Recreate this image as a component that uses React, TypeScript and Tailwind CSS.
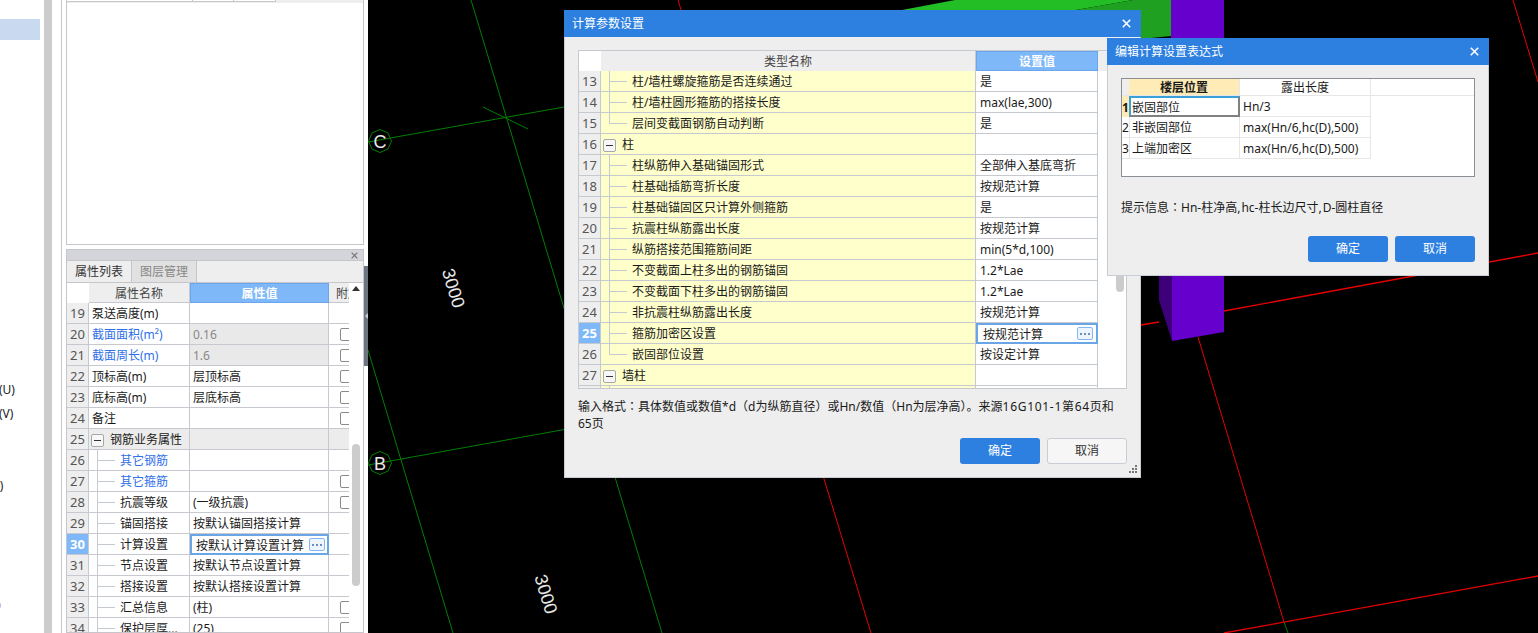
import React from "react";

const FONT = "font-['Noto_Sans','Noto_Sans_CJK_SC',sans-serif]";

function CloseIcon({ color = "#fff", size = 9 }: { color?: string; size?: number }) {
  return (
    <svg width={size} height={size} viewBox="0 0 9 9" className="block">
      <path d="M0.8 0.8L8.2 8.2M8.2 0.8L0.8 8.2" stroke={color} strokeWidth="1.6" />
    </svg>
  );
}

function T({ children }: { children?: React.ReactNode }) {
  return <span className="translate-y-px">{children}</span>;
}

function P({ children }: { children: React.ReactNode }) {
  return <span className="font-['Noto_Sans_CJK_TC',sans-serif]">{children}</span>;
}

function Tree({ last, cap }: { last?: boolean; cap?: boolean }) {
  return (
    <svg width="31" height="20" className="block shrink-0">
      <path d={`M8.5 0V${cap ? 20 : last ? 10.5 : 20}`} stroke="#c5c9d0" fill="none" />
      {!cap && <path d="M8.5 10.5H26" stroke="#c5c9d0" fill="none" />}
    </svg>
  );
}

function Minus() {
  return (
    <div className="ml-[2px] mr-[6px] flex h-[13px] w-[13px] shrink-0 translate-y-px items-center justify-center rounded-[2px] border border-[#a8a8a8] bg-[#f7f7f7]">
      <div className="h-px w-[7px] bg-[#333]" />
    </div>
  );
}

function MoreBtn() {
  return (
    <div className="flex h-[13px] w-[16px] shrink-0 items-center justify-center gap-[2px] rounded-[2px] border border-[#7eb8f8] bg-[#eef5fe]">
      <div className="h-[2px] w-[2px] bg-[#6d8fc0]" />
      <div className="h-[2px] w-[2px] bg-[#6d8fc0]" />
      <div className="h-[2px] w-[2px] bg-[#6d8fc0]" />
    </div>
  );
}

function Index({ n, sel, w = "w-[22px]" }: { n: number; sel?: boolean; w?: string }) {
  return (
    <div
      className={`${w} flex h-full shrink-0 items-center justify-center border-r border-[#c5c9d0] text-[13px] ${
        sel ? "bg-[#7eb8f8] font-bold text-white" : "bg-[#eeeeee] text-[#555]"
      }`}
    >
      <T>{n}</T>
    </div>
  );
}

type D1Row = { n: number; name: string; value: string; kind?: "group" | "last"; sel?: boolean };

const d1Rows: D1Row[] = [
  { n: 13, name: "柱/墙柱螺旋箍筋是否连续通过", value: "是" },
  { n: 14, name: "柱/墙柱圆形箍筋的搭接长度", value: "max(lae,300)" },
  { n: 15, name: "层间变截面钢筋自动判断", value: "是", kind: "last" },
  { n: 16, name: "柱", value: "", kind: "group" },
  { n: 17, name: "柱纵筋伸入基础锚固形式", value: "全部伸入基底弯折" },
  { n: 18, name: "柱基础插筋弯折长度", value: "按规范计算" },
  { n: 19, name: "柱基础锚固区只计算外侧箍筋", value: "是" },
  { n: 20, name: "抗震柱纵筋露出长度", value: "按规范计算" },
  { n: 21, name: "纵筋搭接范围箍筋间距", value: "min(5*d,100)" },
  { n: 22, name: "不变截面上柱多出的钢筋锚固", value: "1.2*Lae" },
  { n: 23, name: "不变截面下柱多出的钢筋锚固", value: "1.2*Lae" },
  { n: 24, name: "非抗震柱纵筋露出长度", value: "按规范计算" },
  { n: 25, name: "箍筋加密区设置", value: "按规范计算", sel: true },
  { n: 26, name: "嵌固部位设置", value: "按设定计算", kind: "last" },
  { n: 27, name: "墙柱", value: "", kind: "group" },
];

function SettingsDialog() {
  return (
    <div className="absolute left-[564px] top-[10px] flex h-[468px] w-[577px] flex-col">
      <div className="flex h-[27px] shrink-0 items-center justify-between bg-[#2d7fe0] pl-[8px] pr-[10px] text-[12px] text-white">
        <span>计算参数设置</span>
        <CloseIcon />
      </div>
      <div className="relative flex flex-1 flex-col border-x border-b border-[#c8ccd4] bg-[#eeeeee] px-[13px] pt-[13px]">
        <div className="relative h-[339px] overflow-hidden border border-[#c5c9d0] bg-white">
          <div className="flex h-[20px] bg-[#eeeeee] text-[12px] text-[#444]">
            <div className="w-[22px] shrink-0 bg-white" />
            <div className="flex w-[375px] shrink-0 items-center justify-center border-r border-[#c5c9d0]">
              <T>类型名称</T>
            </div>
            <div className="flex w-[122px] shrink-0 items-center justify-center border border-[#6aa6ec] bg-[#7eb8f8] font-bold text-white">
              <T>设置值</T>
            </div>
          </div>
          {d1Rows.map((r) => (
            <div key={r.n} className="flex h-[21px] text-[12px] text-[#1a1a1a]">
              <div className="w-[22px] shrink-0 border-b border-[#c5c9d0]">
                <Index n={r.n} sel={r.sel} />
              </div>
              <div className="flex w-[375px] shrink-0 items-center border-b border-r border-[#c5c9d0] bg-[#ffffcc]">
                {r.kind === "group" ? <Minus /> : <Tree last={r.kind === "last"} />}
                <T>{r.name}</T>
              </div>
              {r.sel ? (
                <div className="flex w-[122px] shrink-0 items-center justify-between border-2 border-[#6aa6e6] pl-[5px] pr-[3px]">
                  <T>{r.value}</T>
                  <MoreBtn />
                </div>
              ) : (
                <div className="flex w-[122px] shrink-0 items-center border-b border-r border-[#c5c9d0] pl-[4px]">
                  <T>{r.value}</T>
                </div>
              )}
            </div>
          ))}
          <div className="flex h-[21px]">
            <div className="w-[22px] shrink-0 border-r border-[#c5c9d0] bg-[#eeeeee]" />
            <div className="w-[375px] shrink-0 border-r border-[#c5c9d0] bg-[#ffffcc]">
              <Tree cap />
            </div>
            <div className="w-[122px] shrink-0 border-r border-[#c5c9d0]" />
          </div>
          <div className="absolute left-[537px] top-[150px] h-[91px] w-[8px] rounded-[4px] bg-[#cccccc]" />
        </div>
        <p className="mt-[8px] text-[12px] leading-[17px] text-[#1a1a1a]">
          输入格式<P>：</P>具体数值或数值*d<P>（</P>d为纵筋直径<P>）</P>或Hn/数值<P>（</P>Hn为层净高<P>）</P>。来源
          <span className="tracking-[0.7px]">16G101-1第64</span>页和
          <br />
          65页
        </p>
        <div className="mt-[6px] flex justify-end gap-[7px]">
          <button className="h-[26px] w-[80px] rounded-[3px] bg-[#2d7fe0] text-[12px] text-white">确定</button>
          <button className="h-[26px] w-[80px] rounded-[3px] border border-[#c8ccd4] bg-[#f6f6f6] text-[12px] text-[#333]">
            取消
          </button>
        </div>
        <svg width="10" height="10" viewBox="0 0 10 10" className="absolute bottom-[2px] right-[2px]">
          <path d="M7 0h2v2H7zM4 3h2v2H4zM7 3h2v2H7zM1 6h2v2H1zM4 6h2v2H4zM7 6h2v2H7z" fill="#777" />
        </svg>
      </div>
    </div>
  );
}

const d2Rows = [
  { n: "2", a: "非嵌固部位", b: "max(Hn/6,hc(D),500)" },
  { n: "3", a: "上端加密区", b: "max(Hn/6,hc(D),500)" },
];

function ExprDialog() {
  return (
    <div className="absolute left-[1107px] top-[38px] flex h-[238px] w-[382px] flex-col">
      <div className="flex h-[27px] shrink-0 items-center justify-between bg-[#2d7fe0] pl-[8px] pr-[10px] text-[12px] text-white">
        <span>编辑计算设置表达式</span>
        <CloseIcon />
      </div>
      <div className="flex flex-1 flex-col border-x border-b border-[#c8ccd4] bg-[#eeeeee] px-[13px] pt-[13px] text-[12px] text-[#1a1a1a]">
        <div className="h-[99px] border border-[#8a8f96] bg-white">
          <div className="flex h-[17px] border-b border-[#e6e6e6]">
            <div className="w-[7px] bg-[#eeeeee]" />
            <div className="flex w-[111px] items-center justify-center border-r border-[#e6e6e6] bg-[#feebb5] font-bold">
              <T>楼层位置</T>
            </div>
            <div className="flex w-[131px] items-center justify-center border-r border-[#e6e6e6]">
              <T>露出长度</T>
            </div>
          </div>
          <div className="flex h-[21px]">
            <div className="flex w-[7px] items-center justify-center overflow-hidden bg-[#feebb5] font-bold">
              <T>1</T>
            </div>
            <div className="flex w-[111px] items-center border-2 border-b-[#808080] border-l-[#3aa0d8] border-r-[#808080] border-t-[#3aa0d8] pl-[1px]">
              <T>嵌固部位</T>
            </div>
            <div className="flex w-[131px] items-center border-b border-r border-[#e6e6e6] pl-[3px]">
              <T>Hn/3</T>
            </div>
          </div>
          {d2Rows.map((r) => (
            <div key={r.n} className="flex h-[21px]">
              <div className="flex w-[7px] items-center justify-center overflow-hidden border-b border-[#e6e6e6]">
                <T>{r.n}</T>
              </div>
              <div className="flex w-[111px] items-center border-x border-b border-[#e6e6e6] pl-[2px]">
                <T>{r.a}</T>
              </div>
              <div className="flex w-[131px] items-center border-b border-r border-[#e6e6e6] pl-[3px]">
                <T>{r.b}</T>
              </div>
            </div>
          ))}
        </div>
        <p className="mt-[21px] leading-[17px]">
          提示信息<P>：</P>Hn-柱净高,<span className="ml-[1px]">hc-</span>柱长边尺寸,
          <span className="ml-[1px]">D-</span>圆柱直径
        </p>
        <div className="mt-[20px] flex justify-end gap-[7px]">
          <button className="h-[26px] w-[80px] rounded-[3px] bg-[#2d7fe0] text-white">确定</button>
          <button className="h-[26px] w-[80px] rounded-[3px] bg-[#2d7fe0] text-white">取消</button>
        </div>
      </div>
    </div>
  );
}

type PRow = {
  n: number;
  name: string;
  value?: string;
  blue?: boolean;
  grey?: boolean;
  check?: boolean;
  tree?: boolean;
  group?: boolean;
  sel?: boolean;
};

const pRows: PRow[] = [
  { n: 19, name: "泵送高度(m)" },
  { n: 20, name: "截面面积(m²)", value: "0.16", blue: true, grey: true, check: true },
  { n: 21, name: "截面周长(m)", value: "1.6", blue: true, grey: true, check: true },
  { n: 22, name: "顶标高(m)", value: "层顶标高", check: true },
  { n: 23, name: "底标高(m)", value: "层底标高", check: true },
  { n: 24, name: "备注", check: true },
  { n: 25, name: "钢筋业务属性", group: true },
  { n: 26, name: "其它钢筋", tree: true, blue: true },
  { n: 27, name: "其它箍筋", tree: true, blue: true, check: true },
  { n: 28, name: "抗震等级", value: "(一级抗震)", tree: true, check: true },
  { n: 29, name: "锚固搭接", value: "按默认锚固搭接计算", tree: true },
  { n: 30, name: "计算设置", value: "按默认计算设置计算", tree: true, sel: true },
  { n: 31, name: "节点设置", value: "按默认节点设置计算", tree: true },
  { n: 32, name: "搭接设置", value: "按默认搭接设置计算", tree: true },
  { n: 33, name: "汇总信息", value: "(柱)", tree: true, check: true },
  { n: 34, name: "保护层厚...", value: "(25)", tree: true, check: true },
];

function PropertyPanel() {
  return (
    <div className="flex min-h-0 flex-1 flex-col overflow-hidden border border-[#c5c5cb] bg-white text-[12px] text-[#1a1a1a]">
      <div className="flex h-[11px] shrink-0 items-center justify-end border-b border-[#c5c5cb] bg-[#d4d5da] pr-[5px]">
        <CloseIcon color="#777" size={7} />
      </div>
      <div className="flex h-[22px] shrink-0 border-b border-[#c5c5cb] bg-[#eeeeee]">
        <div className="flex w-[65px] items-center justify-center border-r border-[#c5c5cb] text-[#333]">属性列表</div>
        <div className="flex w-[65px] items-center justify-center border-r border-[#c5c5cb] bg-[#e1e1e1] text-[#888]">
          图层管理
        </div>
      </div>
      <div className="flex min-h-0 flex-1">
        <div className="w-[282px] shrink-0">
          <div className="flex h-[20px]">
            <div className="w-[22px] shrink-0 bg-white" />
            <div className="flex w-[101px] shrink-0 items-center justify-center border-b border-r border-[#c8c8d0] bg-[#eeeeee] text-[#444]">
              <T>属性名称</T>
            </div>
            <div className="flex w-[139px] shrink-0 items-center justify-center border border-[#6aa6ec] bg-[#7eb8f8] font-bold text-white">
              <T>属性值</T>
            </div>
            <div className="w-[20px] shrink-0 overflow-hidden whitespace-nowrap border-b border-[#c8c8d0] bg-[#eeeeee] pl-[7px] pt-px leading-[19px] text-[#444]">
              附加
            </div>
          </div>
          {pRows.map((r) => (
            <div key={r.n} className={`flex h-[21px] ${r.group ? "bg-[#ececec]" : ""}`}>
              <div className="w-[22px] shrink-0 border-b border-[#c8c8d0]">
                <Index n={r.n} sel={r.sel} />
              </div>
              <div
                className={`flex w-[101px] shrink-0 items-center overflow-hidden whitespace-nowrap border-b border-r border-[#c8c8d0] ${
                  r.blue ? "text-[#2f6fe8]" : ""
                } ${!r.tree && !r.group ? "pl-[3px]" : ""}`}
              >
                {r.tree && <Tree />}
                {r.group && <Minus />}
                <T>{r.name}</T>
              </div>
              {r.sel ? (
                <div className="flex w-[139px] shrink-0 items-center justify-between border-2 border-[#6aa6e6] pl-[4px] pr-[2px]">
                  <T>{r.value}</T>
                  <MoreBtn />
                </div>
              ) : (
                <div
                  className={`flex w-[139px] shrink-0 items-center border-b border-r border-[#c8c8d0] pl-[3px] ${
                    r.grey ? "bg-[#e9e9e9] text-[#888]" : ""
                  }`}
                >
                  <T>{r.value}</T>
                </div>
              )}
              <div className="flex w-[20px] shrink-0 items-center justify-end overflow-hidden border-b border-[#c8c8d0]">
                {r.check && (
                  <div className="mr-[-3px] h-[13px] w-[12px] shrink-0 rounded-[2px] border border-[#8a8a8a] bg-white" />
                )}
              </div>
            </div>
          ))}
        </div>
        <div className="flex-1 pl-[3px] pt-[3px]">
          <svg width="8" height="5" viewBox="0 0 8 5" className="block">
            <path d="M4 0L8 5H0Z" fill="#333" />
          </svg>
          <div className="mt-[153px] h-[142px] w-[8px] rounded-[4px] bg-[#cccccc]" />
        </div>
      </div>
    </div>
  );
}

function Canvas() {
  const green = "#007f00";
  const red = "#e60000";
  return (
    <div className="min-w-0 flex-1 bg-black">
      <svg width="1170" height="633" viewBox="368 0 1170 633" className="block">
        <polygon points="902,10 955,0 1133,0 1076,10" fill="#23bd25" />
        <polygon points="1076,10 1133,0 1171,0 1171,36 1141,39 1141,10" fill="#1fa021" />
        <polygon points="1171,0 1224,0 1224,40 1171,40" fill="#6600cc" />
        <polygon points="1172,270 1224,270 1224,332 1172,341" fill="#6600cc" />
        <polygon points="1159,270 1172,270 1172,341 1159,300" fill="#3d007a" />

        <g stroke={green} strokeWidth="1" fill="none">
          <line x1="368" y1="142" x2="900" y2="47" />
          <line x1="483" y1="107" x2="528" y2="129" />
          <line x1="471" y1="0" x2="662" y2="633" />
          <line x1="368" y1="350" x2="453" y2="633" />
          <line x1="368" y1="465" x2="700" y2="405" />
          <line x1="1284" y1="622" x2="1288" y2="633" />
          <polygon points="380,129.5 388,133 391.5,141 388,149 380,152.5 372,149 368.5,141 372,133" />
          <polygon points="380,451.5 388,455 391.5,463 388,471 380,474.5 372,471 368.5,463 372,455" />
        </g>
        <g stroke={red} fill="none">
          <line x1="678" y1="0" x2="871" y2="633" strokeWidth="1" />
          <line x1="1198" y1="337" x2="1284" y2="622" strokeWidth="1" />
          <line x1="1513" y1="0" x2="1538" y2="82" strokeWidth="1" />
          <line x1="1224" y1="633" x2="1538" y2="576" strokeWidth="1.3" />
          <line x1="1141" y1="325" x2="1159" y2="322" strokeWidth="1.3" />
          <line x1="1224" y1="311" x2="1538" y2="253" strokeWidth="1.3" />
        </g>
        <g fill="#e8e8e8" className="font-['Liberation_Sans',sans-serif]">
          <text x="380" y="147.5" fontSize="18" textAnchor="middle">C</text>
          <text x="380" y="469.5" fontSize="18" textAnchor="middle">B</text>
          <text x="0" y="0" fontSize="18" textAnchor="middle" transform="translate(447.5 290) rotate(73)">3000</text>
          <text x="0" y="0" fontSize="18" textAnchor="middle" transform="translate(540 596) rotate(73)">3000</text>
        </g>
      </svg>
    </div>
  );
}

export default function App() {
  return (
    <div className={`relative flex h-[633px] w-[1538px] overflow-hidden bg-white ${FONT}`}>
      <div className="w-[44px] shrink-0 overflow-hidden whitespace-nowrap text-[12px] leading-[17px] text-[#1a1a1a]">
        <div className="mt-[19px] h-[21px] w-[40px] bg-[#c9daf0]" />
        <div className="ml-[-1px] mt-[341px]">(U)</div>
        <div className="ml-[-1px] mt-[7px]">(V)</div>
        <div className="ml-[-7px] mt-[55px]">0)</div>
        <div className="ml-[-6px] mt-[103px] text-[#a02020]">0</div>
      </div>
      <div className="w-[8px] shrink-0 bg-[#cccccc]" />
      <div className="w-[9px] shrink-0 bg-white" />
      <div className="flex w-[303px] shrink-0 flex-col gap-[4px] border-l border-[#c5c5cb] pl-[4px]">
        <div className="h-[245px] shrink-0 border-x border-b border-[#c5c5cb] bg-white">
          <div className="flex h-[3px] bg-[#eeeeee]">
            <div className="h-[2px] w-[126px] border-b border-r border-[#c8c8c8] bg-white" />
            <div className="h-[2px] w-[41px] border-b border-r border-[#c8c8c8] bg-white" />
            <div className="h-[2px] w-[42px] border-b border-r border-[#c8c8c8] bg-white" />
          </div>
        </div>
        <PropertyPanel />
      </div>
      <div className="flex w-[4px] shrink-0 flex-col bg-white">
        <div className="mt-[266px] flex h-[100px] items-center justify-center bg-[#6d7580]">
          <svg width="3" height="6" viewBox="0 0 3 6" className="block">
            <path d="M3 0V6L0 3Z" fill="#c8ccd0" />
          </svg>
        </div>
      </div>
      <Canvas />
      <SettingsDialog />
      <ExprDialog />
    </div>
  );
}
